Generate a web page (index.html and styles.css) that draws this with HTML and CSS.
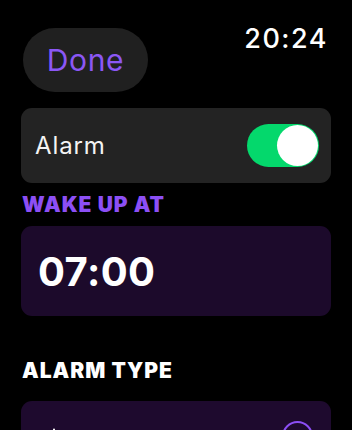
FILE: index.html
```html
<!DOCTYPE html>
<html lang="en">
<head>
<meta charset="utf-8">
<title>Alarm</title>
<link rel="stylesheet" href="styles.css">
</head>
<body>
<div class="screen">
  <header class="top">
    <button class="done">Done</button>
    <span class="clock">20:24</span>
  </header>

  <div class="card row">
    <span class="row-label">Alarm</span>
    <span class="toggle"><span class="knob"></span></span>
  </div>

  <h2 class="section purple">WAKE UP AT</h2>
  <div class="card time-card">
    <span class="time">07:00</span>
  </div>

  <h2 class="section white">ALARM TYPE</h2>
  <div class="card type-card">
    <svg class="type-icon" width="22" height="22" viewBox="0 0 22 22">
      <path d="M11 1.5v1.5" stroke="#fff" stroke-width="2" stroke-linecap="round"/>
      <path d="M5 16V10a6 6 0 0 1 12 0v6l2 2H3z" fill="#fff"/>
    </svg>
    <span class="radio"></span>
  </div>
</div>
</body>
</html>
```

FILE: styles.css
```css
* { box-sizing: border-box; }
html, body { margin: 0; padding: 0; background: #000; }
body {
  width: 352px;
  height: 430px;
  overflow: hidden;
  font-family: Inter, "Liberation Sans", sans-serif;
  color: #fff;
}
.screen {
  padding: 0 21px;
  display: flex;
  flex-direction: column;
}
.top {
  display: flex;
  justify-content: space-between;
  align-items: flex-start;
  padding-top: 26px;
}
.done {
  margin: 2px 0 0 2px;
  width: 125px;
  height: 64px;
  border: none;
  border-radius: 32px;
  background: #202020;
  color: #8b57f5;
  font-family: Inter, "Liberation Sans", sans-serif;
  font-size: 30px;
  line-height: 64px;
  letter-spacing: 0.6px;
  padding: 0;
}
.clock {
  font-size: 27px;
  line-height: 26px;
  font-weight: 500;
  letter-spacing: 1.5px;
  margin-right: 3px;
  color: #fff;
}
.card {
  border-radius: 11px;
  display: flex;
  align-items: center;
}
.row {
  margin-top: 16px;
  height: 75px;
  background: #232323;
  padding: 0 12px 0 14px;
  justify-content: space-between;
}
.row-label {
  font-size: 24px;
  letter-spacing: 0.9px;
  color: #f4f4f4;
}
.toggle {
  width: 72px;
  height: 43px;
  border-radius: 22px;
  background: #04d86c;
  display: flex;
  align-items: center;
  justify-content: flex-end;
  padding-right: 1px;
}
.knob {
  width: 41px;
  height: 41px;
  border-radius: 50%;
  background: #fff;
}
.section {
  margin: 0;
  font-size: 21px;
  line-height: 21px;
  font-weight: 900;
  letter-spacing: 1px;
  padding-left: 1px;
}
.purple { color: #8c4ff5; margin-top: 11px; }
.white { color: #fff; margin-top: 44px; }
.time-card {
  margin-top: 11px;
  height: 90px;
  background: #1c0a2b;
  padding-left: 17px;
}
.time {
  font-size: 40px;
  font-weight: 700;
  letter-spacing: 0.4px;
}
.type-card {
  margin-top: 20px;
  height: 72px;
  background: #1e0a2e;
  padding: 0 18px 0 22px;
  justify-content: space-between;
  align-items: flex-start;
}
.type-icon {
  margin-top: 27px;
}
.radio {
  margin-top: 20px;
  width: 31px;
  height: 31px;
  border-radius: 50%;
  border: 2.5px solid #8c4ff5;
}
```
